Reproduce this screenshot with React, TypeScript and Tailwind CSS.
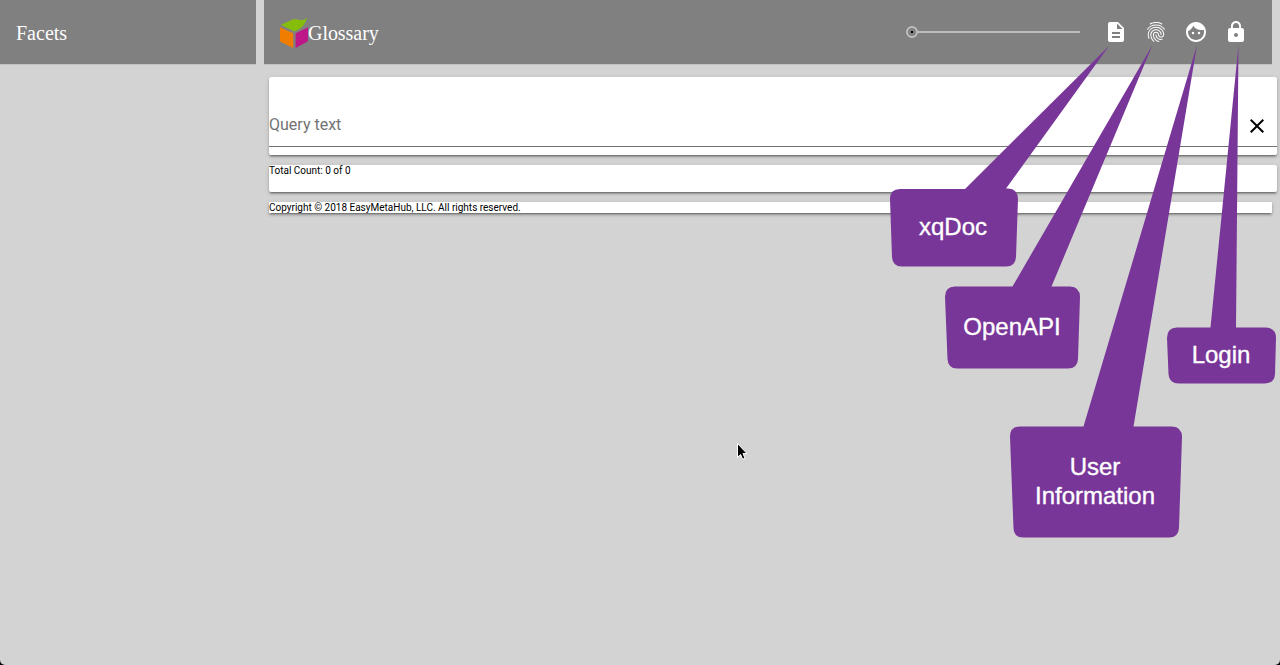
import { MdClose, MdDescription, MdFace, MdFingerprint, MdLock } from "react-icons/md";

const actions = [
  { label: "xqDoc", Icon: MdDescription },
  { label: "OpenAPI", Icon: MdFingerprint },
  { label: "User information", Icon: MdFace },
  { label: "Login", Icon: MdLock },
];

const cardShadow =
  "shadow-[0_2px_2px_0_rgba(0,0,0,0.24),0_1px_5px_0_rgba(0,0,0,0.12),0_3px_1px_-2px_rgba(0,0,0,0.2)]";

function Logo() {
  return (
    <svg width="28" height="32" viewBox="0 0 28 32" className="overflow-visible" aria-hidden="true">
      <path d="M.8 8.700 13.400 3.300C18 2.400 23.200 6.200 26.800 1.700 25.200 8.500 22.500 12.400 14.300 15.400Z" fill="#86bc0b" />
      <path d="M0 11.200 13.200 17.300V32L0 25.500Z" fill="#f07d00" />
      <path d="M15.600 17.300 28 11.200V25.200L15.600 32Z" fill="#be1788" />
    </svg>
  );
}

function Slider() {
  return (
    <div className="flex items-center" role="slider" aria-valuenow={0} aria-label="Zoom">
      <span className="flex size-3 items-center justify-center rounded-full border-2 border-[#bdbdbd]">
        <span className="size-0.5 bg-black" />
      </span>
      <span className="h-0.5 w-[162px] bg-[#bdbdbd]" />
    </div>
  );
}

function Callouts() {
  return (
    <div className="pointer-events-none absolute inset-0">
      <svg className="absolute inset-0" width="1280" height="665" viewBox="0 0 1280 665" fill="#783698" aria-hidden="true">
        <path d="M1109 46 965 189H900Q890 189 890 199L892 257Q892.500 266.500 902 266.500H1006Q1015.500 266.500 1016 257L1018 199Q1018 189 1008 188.500H1006Z" />
        <path d="M1152.500 45 1012.500 286.500H955Q945 286.500 945 297L947.500 359Q948 368.500 957 368.500H1068Q1077.500 368.500 1078 359L1080 297Q1080 287 1070 286.500H1051.500Z" />
        <path d="M1197 45 1083.500 426.500H1020Q1010 426.500 1010 437L1013.500 528Q1014 537.500 1023 537.500H1169Q1178.500 537.500 1179 528L1182 437Q1182 427 1172 426.500H1133.500Z" />
        <path d="M1238.500 45 1210.500 327.500H1177Q1167 327.500 1167 338L1168.500 374Q1169 383.500 1179 383.500H1265Q1274.500 383.500 1275 374L1276 338Q1276 328 1266 327.500H1236Z" />
      </svg>
      <div className="text-center font-['Liberation_Sans',sans-serif] text-2xl leading-[29px] text-white [-webkit-text-stroke:0.35px_white]">
        <div className="absolute left-[889px] top-[212px] w-32">xqDoc</div>
        <div className="absolute left-[944px] top-[312px] w-[136px]">OpenAPI</div>
        <div className="absolute left-[1167px] top-[340px] w-[108px]">Login</div>
        <div className="absolute left-[1009px] top-[452px] w-[172px]">
          User
          <br />
          Information
        </div>
      </div>
      <svg className="absolute left-[736px] top-[442px]" width="12" height="19" viewBox="0 0 12 19" aria-hidden="true">
        <path d="M1.500 1.500V15.300L4.600 12.500 6.600 17.200 9 16.200 7 11.600H11Z" fill="#000" stroke="#fff" strokeWidth="1" />
      </svg>
    </div>
  );
}

export default function App() {
  return (
    <div className="h-[665px] w-[1280px] overflow-hidden bg-black">
      <div className="relative flex h-full gap-2 overflow-hidden rounded-b-[5px] bg-[#d3d3d3] font-[Roboto,sans-serif]">
        <aside className="w-64 shrink-0">
          <header className="flex h-16 items-center bg-[#808080] px-4 pt-0.5 font-['Liberation_Serif',serif] text-xl text-white shadow-[0_1px_0_#c2c2c2]">
            Facets
          </header>
        </aside>
        <main className="w-[1008px] shrink-0">
          <header className="flex h-16 items-center bg-[#808080] pl-4 pr-6 text-white shadow-[0_1px_0_#c2c2c2]">
            <Logo />
            <h1 className="pt-0.5 font-['Liberation_Serif',serif] text-xl tracking-[-0.05px]">Glossary</h1>
            <div className="ml-auto flex items-center">
              <Slider />
              <nav className="ml-6 flex gap-4">
                {actions.map(({ label, Icon }) => (
                  <button key={label} aria-label={label} className="size-6">
                    <Icon size={24} />
                  </button>
                ))}
              </nav>
            </div>
          </header>
          <div className="flex w-[1013px] flex-col gap-2.5 pl-[5px] pt-[13px] text-[10px] leading-[11px] text-black">
            <section className={`h-[78px] rounded-[2px] bg-white pt-[27px] ${cardShadow}`}>
              <div className="flex h-[43px] items-center justify-between border-b border-[#737373] pr-2">
                <span className="text-base text-[#737373]">Query text</span>
                <MdClose size={24} className="mt-0.5 size-6" />
              </div>
            </section>
            <section className={`h-[27px] rounded-[2px] bg-white ${cardShadow}`}>Total Count: 0 of 0</section>
            <footer className={`mr-[5px] h-[11px] bg-white ${cardShadow}`}>
              Copyright © 2018 EasyMetaHub, LLC. All rights reserved.
            </footer>
          </div>
        </main>
        <Callouts />
      </div>
    </div>
  );
}
